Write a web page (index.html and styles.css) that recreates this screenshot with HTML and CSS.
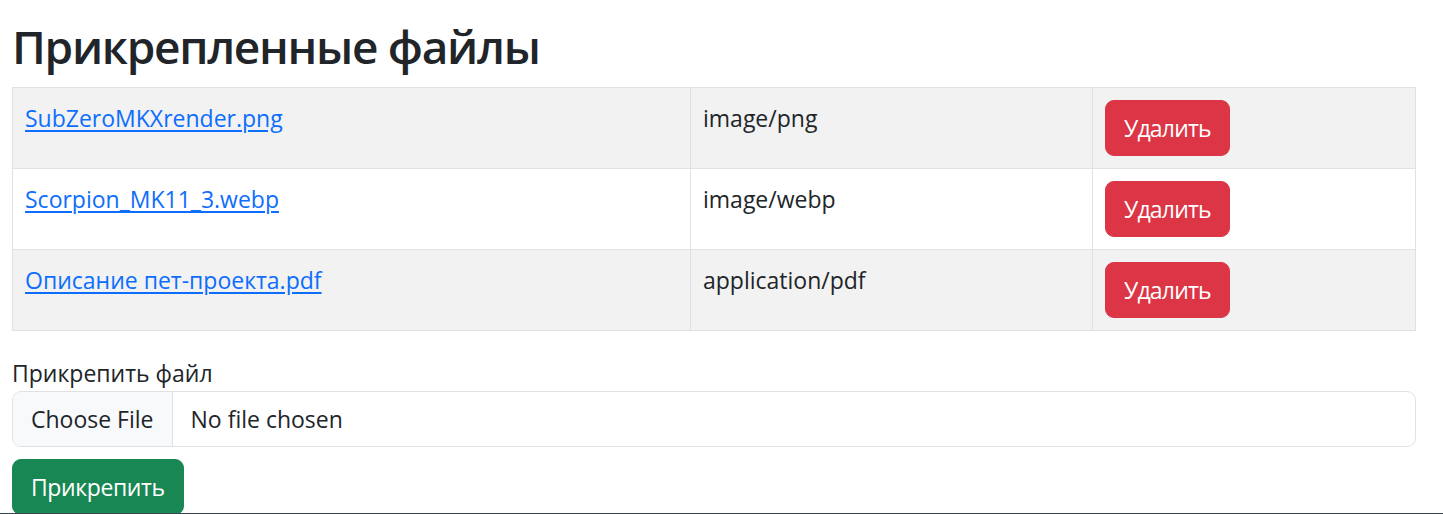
FILE: index.html
```html
<!DOCTYPE html>
<html lang="ru">
<head>
<meta charset="utf-8">
<title>Прикрепленные файлы</title>
<link rel="stylesheet" href="styles.css">
</head>
<body>
<main class="page">
  <h1 class="title">Прикрепленные файлы</h1>
  <table class="files">
    <colgroup>
      <col class="col-name">
      <col class="col-type">
      <col class="col-act">
    </colgroup>
    <tbody>
      <tr class="odd">
        <td><a class="file-link" href="#">SubZeroMKXrender.png</a></td>
        <td>image/png</td>
        <td><button class="btn btn-danger" type="button">Удалить</button></td>
      </tr>
      <tr>
        <td><a class="file-link" href="#">Scorpion_MK11_3.webp</a></td>
        <td>image/webp</td>
        <td><button class="btn btn-danger" type="button">Удалить</button></td>
      </tr>
      <tr class="odd">
        <td><a class="file-link" href="#">Описание пет-проекта.pdf</a></td>
        <td>application/pdf</td>
        <td><button class="btn btn-danger" type="button">Удалить</button></td>
      </tr>
    </tbody>
  </table>
  <form class="upload">
    <label class="upload-label">Прикрепить файл</label>
    <div class="file-input">
      <span class="file-btn">Choose File</span>
      <span class="file-name">No file chosen</span>
    </div>
    <button class="btn btn-success" type="button">Прикрепить</button>
  </form>
</main>
<div class="bottom-line"></div>
</body>
</html>
```

FILE: styles.css
```css
html, body {
  margin: 0;
  padding: 0;
  background: #ffffff;
}

body {
  font-family: "Open Sans", "Noto Sans", sans-serif;
  font-size: 23px;
  line-height: 36px;
  color: #212529;
  overflow: hidden;
}

.page {
  padding: 17px 27px 0 12px;
}

.title {
  margin: 0 0 12px;
  font-size: 46px;
  line-height: 58px;
  font-weight: 600;
  letter-spacing: -1.3px;
  color: #212529;
}

.files {
  width: 100%;
  border-collapse: collapse;
  border: 1px solid #dee2e6;
  margin-bottom: 24px;
  table-layout: fixed;
}

.col-name { width: 678px; }
.col-type { width: 402px; }

.files td {
  border: 1px solid #dee2e6;
  padding: 12px;
  vertical-align: top;
  background: #ffffff;
}

.files tr.odd td {
  background: #f2f2f2;
}

.file-link {
  color: #0d6efd;
  text-decoration: underline;
  text-underline-offset: 3px;
}

.btn {
  display: inline-block;
  font-family: inherit;
  font-size: 23px;
  line-height: 36px;
  padding: 9px 18px;
  border: 1px solid transparent;
  border-radius: 9px;
  color: #ffffff;
  cursor: pointer;
}

.btn-danger {
  background: #dc3545;
  border-color: #dc3545;
  letter-spacing: -0.8px;
}

.btn-success {
  background: #198754;
  border-color: #198754;
  letter-spacing: -0.4px;
  margin-top: 12px;
}

.upload-label {
  display: block;
}

.file-input {
  display: flex;
  border: 1px solid #dee2e6;
  border-radius: 9px;
  overflow: hidden;
  height: 54px;
  align-items: stretch;
}

.file-btn {
  background: #f8f9fa;
  border-right: 1px solid #dee2e6;
  padding: 9px 18px;
}

.file-name {
  padding: 9px 18px;
}

.bottom-line {
  position: fixed;
  left: 0;
  right: 0;
  bottom: 0;
  height: 1px;
  background: #3b4750;
}
```
